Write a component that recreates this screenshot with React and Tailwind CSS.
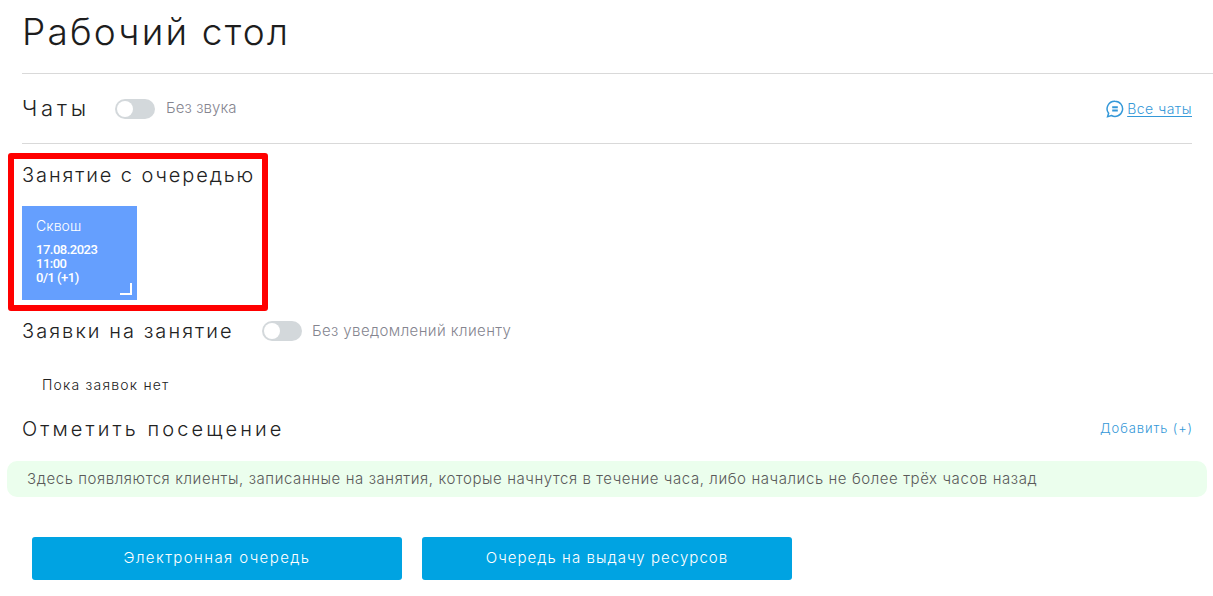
function Toggle() {
  return (
    <div className="h-5 w-10 rounded-full bg-[#d3d8db] p-0.5 shrink-0">
      <div className="h-4 w-4 rounded-full bg-white" />
    </div>
  );
}

export default function App() {
  return (
    <div className="w-[1213px] h-[596px] overflow-hidden bg-white font-['Inter',sans-serif] font-light text-[#222]">
      <div className="pl-[22px]">
        <h1 className="h-[73px] pt-[8px] text-[37px] leading-[48px] font-light tracking-[2.2px] text-[#1d1d1d]">Рабочий стол</h1>
        <div className="border-t border-[#d9d9d9]" />
        <div className="mr-[21px] h-[70px] flex items-center border-b border-[#d9d9d9]">
          <span className="text-[22px] tracking-[3.8px] w-[93px]">Чаты</span>
          <Toggle />
          <span className="ml-[11px] text-[15px] tracking-[0.1px] text-[#85858f]">Без звука</span>
          <div className="ml-auto flex items-center gap-[3px] text-[#3498d8]">
            <svg width="18" height="18" viewBox="0 0 18 18" fill="none" stroke="currentColor" strokeWidth="1.5">
              <path d="M9 1.2a7.6 7.6 0 1 1-3.6 14.3L1.6 16.6l1-3.3A7.6 7.6 0 0 1 9 1.2z" />
              <path d="M6.2 7.2h5.6M6.2 10.6h5.6" strokeWidth="2" />
            </svg>
            <a className="text-[14px] tracking-[0.5px] underline underline-offset-2">Все чаты</a>
          </div>
        </div>
      </div>

      <div className="ml-[8px] mt-[9px] w-[260px] h-[158px] border-[6px] border-[#ff0000] rounded-[3px] pl-[8px] pt-[2px]">
        <h2 className="text-[20px] leading-[28px] tracking-[1.9px] whitespace-nowrap">Занятие с очередью</h2>
        <div className="relative mt-[17px] w-[115px] h-[94px] bg-[#659ffe] text-white pl-[14px] pt-[11px]">
          <div className="text-[14px] leading-[17px] tracking-[0.1px]">Сквош</div>
          <div className="mt-[9px] font-['Roboto',sans-serif] text-[13px] leading-[14px] font-medium tracking-[-0.5px]">
            <div>17.08.2023</div>
            <div>11:00</div>
            <div>0/1 (+1)</div>
          </div>
          <div className="absolute right-[5px] bottom-[5px] w-3 h-3 border-r-2 border-b-2 border-white" />
        </div>
      </div>

      <div className="pl-[22px] mt-[6px] h-[28px] flex items-center">
        <span className="text-[20px] tracking-[2.05px] w-[240px] whitespace-nowrap">Заявки на занятие</span>
        <Toggle />
        <span className="ml-[10px] text-[15px] tracking-[0.4px] text-[#85858f]">Без уведомлений клиенту</span>
      </div>
      <div className="pl-[42px] mt-[30px] text-[14px] leading-[20px] tracking-[1.2px]">Пока заявок нет</div>

      <div className="pl-[22px] pr-[20px] mt-[20px] h-[28px] flex items-center justify-between">
        <span className="text-[20px] tracking-[3.1px]">Отметить посещение</span>
        <a className="text-[13px] tracking-[0.9px] text-[#3498d8]">Добавить (+)</a>
      </div>

      <div className="ml-[7px] mt-[18px] w-[1200px] h-[36px] rounded-[10px] bg-[#ebfeed] pl-[20px] flex items-center text-[15px] tracking-[0.58px] text-[#5a5a5a] whitespace-nowrap">
        Здесь появляются клиенты, записанные на занятия, которые начнутся в течение часа, либо начались не более трёх часов назад
      </div>

      <div className="ml-[32px] mt-[40px] flex gap-[20px]">
        <button className="w-[370px] h-[43px] rounded-[3px] bg-[#00a3e2] text-white text-[15px] font-light tracking-[1.4px]">Электронная очередь</button>
        <button className="w-[370px] h-[43px] rounded-[3px] bg-[#00a3e2] text-white text-[15px] font-light tracking-[1.05px]">Очередь на выдачу ресурсов</button>
      </div>
    </div>
  );
}
